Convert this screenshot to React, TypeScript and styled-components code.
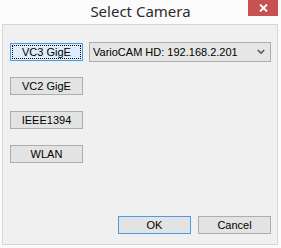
import styled, { createGlobalStyle } from "styled-components";

const GlobalStyle = createGlobalStyle`
  html, body {
    margin: 0;
    padding: 0;
    background: #fbfbfb;
  }
  * {
    box-sizing: border-box;
  }
`;

const Window = styled.div`
  width: 281px;
  height: 248px;
  background: #fbfbfb;
  display: flex;
  flex-direction: column;
  font-family: "Liberation Sans", Arial, sans-serif;
`;

const TitleBar = styled.div`
  height: 24px;
  display: flex;
  justify-content: center;
  position: relative;
`;

const Title = styled.div`
  font-family: "Noto Sans", "Open Sans", sans-serif;
  font-size: 15px;
  line-height: 20px;
  color: #2b2b2b;
  padding-top: 1px;
`;

const CloseButton = styled.div`
  position: absolute;
  top: 0;
  right: 3px;
  width: 30px;
  height: 16px;
  background: #c75050;
  display: flex;
  align-items: center;
  justify-content: center;
`;

const Client = styled.div`
  margin: 0 3px 0 2px;
  height: 221px;
  border: 1px solid #d6d6d6;
  background: #f0f0f0;
  display: flex;
  flex-direction: column;
  justify-content: space-between;
  padding: 17px 6px 10px 7px;
`;

const TopRow = styled.div`
  display: flex;
  align-items: flex-start;
  gap: 6px;
`;

const ButtonColumn = styled.div`
  display: flex;
  flex-direction: column;
  gap: 16px;
  padding-top: 1px;
`;

const Button = styled.div<{ $focused?: boolean; $default?: boolean }>`
  width: 73px;
  height: 18px;
  border: 1px solid
    ${(p) => (p.$focused || p.$default ? "#4a9be8" : "#adadad")};
  background: ${(p) => (p.$focused ? "#dfecfb" : "#e3e3e3")};
  display: flex;
  align-items: center;
  justify-content: center;
  font-size: 11px;
  color: #000;
  position: relative;

  ${(p) =>
    p.$focused &&
    `
    &::after {
      content: "";
      position: absolute;
      inset: 1px;
      border: 1px dotted #000;
    }
  `}
`;

const Combo = styled.div`
  width: 183px;
  height: 20px;
  border: 1px solid #acacac;
  background: #e6e6e6;
  display: flex;
  align-items: center;
  justify-content: space-between;
  padding: 0 5px 0 3px;
  font-size: 11px;
  color: #000;
`;

const Footer = styled.div`
  display: flex;
  justify-content: flex-end;
  gap: 7px;
`;

export default function App() {
  return (
    <>
      <GlobalStyle />
      <Window>
        <TitleBar>
          <Title>Select Camera</Title>
          <CloseButton>
            <svg width="9" height="8" viewBox="0 0 9 8">
              <path d="M1 0.5 L8 7.5 M8 0.5 L1 7.5" stroke="#fff" strokeWidth="1.8" />
            </svg>
          </CloseButton>
        </TitleBar>
        <Client>
          <TopRow>
            <ButtonColumn>
              <Button $focused>VC3 GigE</Button>
              <Button>VC2 GigE</Button>
              <Button>IEEE1394</Button>
              <Button>WLAN</Button>
            </ButtonColumn>
            <Combo>
              <span>VarioCAM HD: 192.168.2.201</span>
              <svg width="8" height="6" viewBox="0 0 8 6">
                <path d="M0.8 1 L4 4.2 L7.2 1" stroke="#555" strokeWidth="1.6" fill="none" />
              </svg>
            </Combo>
          </TopRow>
          <Footer>
            <Button $default>OK</Button>
            <Button>Cancel</Button>
          </Footer>
        </Client>
      </Window>
    </>
  );
}
